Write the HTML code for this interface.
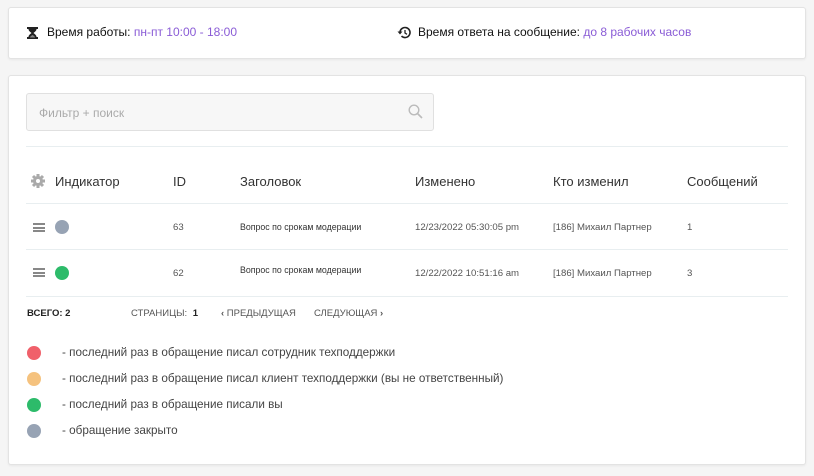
<!DOCTYPE html>
<html><head><meta charset="utf-8"><style>
*{margin:0;padding:0;box-sizing:border-box}
body{width:814px;height:476px;background:#f5f5f5;font-family:"Liberation Sans",sans-serif;position:relative;overflow:hidden;color:#222}
.card{position:absolute;background:#fff;border:1px solid #e3e3e3;border-radius:3px;box-shadow:0 1px 2px rgba(0,0,0,.06)}
.a{position:absolute;white-space:nowrap}
.p{color:#8a5cd6}
.hl{position:absolute;left:26px;width:762px;height:1px;background:#e8eef0}
.th{font-size:13px;color:#333;top:174px}
.td{font-size:9.6px;color:#555}
.dot{position:absolute;width:14px;height:14px;border-radius:50%}
.ham{position:absolute;left:33px;width:12px;height:9px;border-top:2px solid #888;border-bottom:2px solid #888}
.ham:after{content:"";position:absolute;left:0;right:0;top:1.5px;height:2px;background:#888}
.lg{font-size:11.7px;color:#444;left:62px}
.pg{font-size:9.5px;color:#555;top:308px}
</style></head><body>
<div class="card" style="left:8px;top:7px;width:798px;height:52px"></div>
<svg class="a" style="left:27px;top:27px" width="11" height="12" viewBox="0 0 11 12"><path d="M0 0h11v2h-1.5c0 2-2 3-3 4 1 1 3 2 3 4H11v2H0v-2h1.5c0-2 2-3 3-4-1-1-3-2-3-4H0z" fill="#222"/><path d="M3 10.5c0-1 1.5-2 2.5-2.5 1 .5 2.5 1.5 2.5 2.5z" fill="#888"/></svg>
<div class="a" style="left:47px;top:25px;font-size:12px;color:#111">Время работы: <span class="p">пн-пт 10:00 - 18:00</span></div>
<svg class="a" style="left:397px;top:26px" width="14" height="13" viewBox="0 0 14 13"><path d="M3 6.5a5 5 0 1 1 1.5 3.6" fill="none" stroke="#222" stroke-width="1.6"/><path d="M0.5 5.5h5l-2.5 3z" fill="#222"/><path d="M8 4v3l2 1.3" fill="none" stroke="#222" stroke-width="1.3"/></svg>
<div class="a" style="left:418px;top:25px;font-size:12px;color:#111">Время ответа на сообщение: <span class="p">до 8 рабочих часов</span></div>

<div class="card" style="left:8px;top:75px;width:798px;height:390px"></div>
<div class="a" style="left:26px;top:93px;width:408px;height:38px;background:#f7f7f7;border:1px solid #e0e0e0;border-radius:3px"></div>
<div class="a" style="left:39px;top:106px;font-size:12px;color:#aaa">Фильтр + поиск</div>
<svg class="a" style="left:408px;top:104px" width="15" height="15" viewBox="0 0 15 15"><circle cx="6" cy="6" r="4.8" fill="none" stroke="#bbb" stroke-width="1.4"/><path d="M9.5 9.5l4.5 4.5" stroke="#bbb" stroke-width="1.6"/></svg>
<div class="hl" style="top:146px"></div>
<svg class="a" style="left:31px;top:174px" width="14" height="14" viewBox="0 0 14 14"><g fill="#aaa"><circle cx="7" cy="7" r="5"/><g stroke="#aaa" stroke-width="3"><path d="M7 0v14M0 7h14M2 2l10 10M12 2L2 12"/></g></g><circle cx="7" cy="7" r="2" fill="#fff"/></svg>
<div class="a th" style="left:55px">Индикатор</div>
<div class="a th" style="left:173px">ID</div>
<div class="a th" style="left:240px">Заголовок</div>
<div class="a th" style="left:415px">Изменено</div>
<div class="a th" style="left:553px">Кто изменил</div>
<div class="a th" style="left:687px">Сообщений</div>
<div class="hl" style="top:203px"></div>
<div class="ham" style="top:223px"></div><div class="dot" style="left:55px;top:220px;background:#97a3b4"></div>
<div class="a td" style="left:173px;top:222px">63</div>
<div class="a td" style="left:240px;top:222px;color:#333;font-size:8.8px">Вопрос по срокам модерации</div>
<div class="a td" style="left:415px;top:222px">12/23/2022 05:30:05 pm</div>
<div class="a td" style="left:553px;top:222px">[186] Михаил Партнер</div>
<div class="a td" style="left:687px;top:222px">1</div>
<div class="hl" style="top:249px"></div>
<div class="ham" style="top:268px"></div><div class="dot" style="left:55px;top:266px;background:#2dbb6a"></div>
<div class="a td" style="left:173px;top:268px">62</div>
<div class="a td" style="left:240px;top:265px;color:#333;font-size:8.8px">Вопрос по срокам модерации</div>
<div class="a td" style="left:415px;top:268px">12/22/2022 10:51:16 am</div>
<div class="a td" style="left:553px;top:268px">[186] Михаил Партнер</div>
<div class="a td" style="left:687px;top:268px">3</div>
<div class="hl" style="top:296px"></div>
<div class="a pg" style="left:27px;color:#222;font-weight:bold">ВСЕГО: 2</div>
<div class="a pg" style="left:131px">СТРАНИЦЫ: <b style="color:#222;margin-left:3px">1</b></div>
<div class="a pg" style="left:221px"><b>‹</b> ПРЕДЫДУЩАЯ</div>
<div class="a pg" style="left:314px">СЛЕДУЮЩАЯ <b>›</b></div>
<div class="dot" style="left:27px;top:346px;background:#f0606a"></div>
<div class="a lg" style="top:346px">- последний раз в обращение писал сотрудник техподдержки</div>
<div class="dot" style="left:27px;top:372px;background:#f5c27e"></div>
<div class="a lg" style="top:372px">- последний раз в обращение писал клиент техподдержки (вы не ответственный)</div>
<div class="dot" style="left:27px;top:398px;background:#2dbb6a"></div>
<div class="a lg" style="top:398px">- последний раз в обращение писали вы</div>
<div class="dot" style="left:27px;top:424px;background:#97a3b4"></div>
<div class="a lg" style="top:424px">- обращение закрыто</div>
</body></html>
